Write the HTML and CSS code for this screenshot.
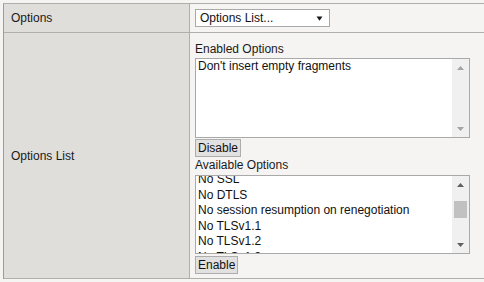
FILE: index.html
```html
<!DOCTYPE html>
<html>
<head>
<meta charset="utf-8">
<link rel="stylesheet" href="styles.css">
</head>
<body>
<div class="form">
  <div class="row r1">
    <div class="label">Options</div>
    <div class="field">
      <div class="select"><span>Options List...</span><svg class="caret" width="7" height="5" viewBox="0 0 7 5"><path d="M0.5 0.5H6.5L3.5 4.8Z" fill="#1a1a1a"/></svg></div>
    </div>
  </div>
  <div class="row r2">
    <div class="label">Options List</div>
    <div class="field col">
      <div class="cap">Enabled Options</div>
      <div class="listbox lb1">
        <div class="items">
          <div class="item">Don't insert empty fragments</div>
        </div>
        <div class="sbar idle">
          <span class="arrow"><svg width="7" height="4" viewBox="0 0 7 4"><path d="M0 4L3.5 0L7 4Z"/></svg></span>
          <span class="track"></span>
          <span class="arrow"><svg width="7" height="4" viewBox="0 0 7 4"><path d="M0 0L3.5 4L7 0Z"/></svg></span>
        </div>
      </div>
      <button class="btn">Disable</button>
      <div class="cap cap2">Available Options</div>
      <div class="listbox lb2">
        <div class="items">
          <div class="scrolled">
            <div class="item">No SSL</div>
            <div class="item">No DTLS</div>
            <div class="item">No session resumption on renegotiation</div>
            <div class="item">No TLSv1.1</div>
            <div class="item">No TLSv1.2</div>
            <div class="item">No TLSv1.3</div>
          </div>
        </div>
        <div class="sbar">
          <span class="arrow"><svg width="7" height="4" viewBox="0 0 7 4"><path d="M0 4L3.5 0L7 4Z"/></svg></span>
          <span class="track"><span class="thumb"></span></span>
          <span class="arrow"><svg width="7" height="4" viewBox="0 0 7 4"><path d="M0 0L3.5 4L7 0Z"/></svg></span>
        </div>
      </div>
      <button class="btn btn2">Enable</button>
    </div>
  </div>
</div>
</body>
</html>
```

FILE: styles.css
```css
html, body {
  margin: 0;
  padding: 0;
}
body {
  background: #f5f4f2;
  font-family: "Liberation Sans", Arial, sans-serif;
  font-size: 12px;
  color: #1a1a1a;
  overflow: hidden;
  width: 484px;
  height: 282px;
}
.form {
  box-sizing: border-box;
  margin: 3px 0 0 3px;
  width: 481px;
  border-top: 1px solid #b0afac;
  border-left: 1px solid #9d9c99;
}
.row {
  display: grid;
  grid-template-columns: 186px 1fr;
  border-bottom: 1px solid #b0afac;
}
.label {
  box-sizing: border-box;
  background: #dfdedb;
  border-right: 1px solid #b0afac;
  padding-left: 7px;
  display: flex;
  align-items: center;
  line-height: 14px;
}
.field {
  padding: 5px 0 5px 5px;
}
.field.col {
  padding: 9px 0 4px 5px;
  display: flex;
  flex-direction: column;
  align-items: flex-start;
}
.select {
  box-sizing: border-box;
  width: 135px;
  height: 18px;
  background: #fff;
  border: 1px solid #a9a9a9;
  display: flex;
  align-items: center;
  justify-content: space-between;
  padding: 0 6px 0 4px;
  line-height: 14px;
  color: #111;
}
.caret {
  display: block;
}
.cap {
  line-height: 15px;
  margin-bottom: 1px;
}
.cap2 {
  margin-bottom: 2px;
}
.listbox {
  box-sizing: border-box;
  width: 275px;
  height: 80px;
  border: 1px solid #a9a9a9;
  background: #fff;
  display: flex;
}
.lb2 {
  height: 79px;
}
.items {
  flex: 1;
  overflow: hidden;
  padding-left: 2px;
  color: #111;
}
.item {
  line-height: 15px;
  white-space: nowrap;
}
.scrolled {
  margin-top: -4px;
}
.scrolled .item {
  line-height: 15.5px;
}
.sbar {
  width: 17px;
  background: #f0f0f0;
  display: flex;
  flex-direction: column;
}
.arrow {
  height: 17px;
  display: flex;
  align-items: center;
  justify-content: center;
  flex: none;
}
.arrow svg {
  display: block;
  fill: #606060;
}
.idle .arrow svg {
  fill: #a3a3a3;
}
.track {
  flex: 1;
  display: flex;
  flex-direction: column;
}
.thumb {
  height: 17px;
  margin: 8px 2px 0 2px;
  background: #c1c1c1;
}
.btn {
  box-sizing: border-box;
  height: 18px;
  margin: 1px 0;
  padding: 0 2px;
  border: 1px solid #adadad;
  background: #e1e1e1;
  font-family: "Liberation Sans", Arial, sans-serif;
  font-size: 12px;
  line-height: 16px;
  color: #111;
  border-radius: 0;
}
.btn2 {
  margin: 2px 0 0 0;
}
```
